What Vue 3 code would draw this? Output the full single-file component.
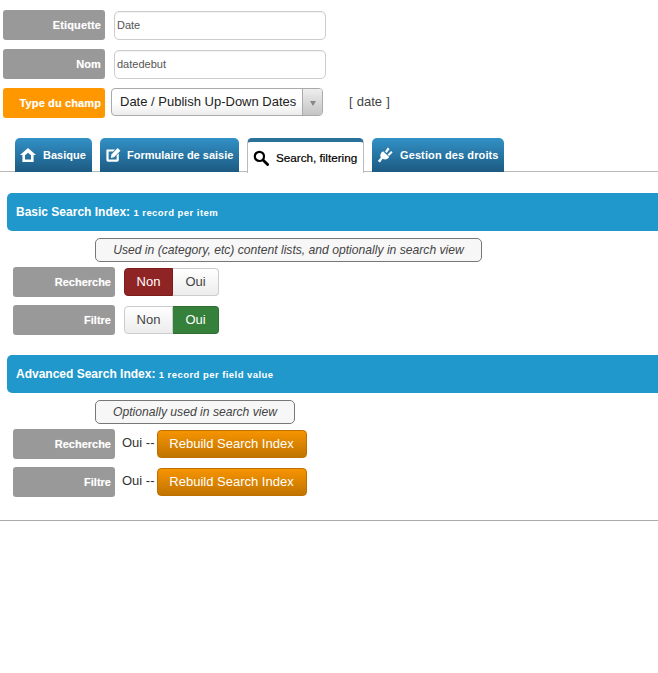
<script setup>
const tabs = [
  { label: 'Basique', icon: 'home' },
  { label: 'Formulaire de saisie', icon: 'edit' },
  { label: 'Search, filtering', icon: 'search', active: true },
  { label: 'Gestion des droits', icon: 'plug' }
]
</script>

<template>
  <div class="page">
    <div class="fields">
      <div class="row">
        <div class="label">Etiquette</div>
        <div class="input">Date</div>
      </div>
      <div class="row">
        <div class="label">Nom</div>
        <div class="input nom">datedebut</div>
      </div>
      <div class="row type">
        <div class="label orange">Type du champ</div>
        <div class="select">
          <span class="select-text">Date / Publish Up-Down Dates</span>
          <span class="select-arrow"><i></i></span>
        </div>
        <span class="code">[ date ]</span>
      </div>
    </div>

    <div class="tabs">
      <div v-for="t in tabs" :key="t.label" class="tab" :class="[t.icon, { active: t.active }]">
        <svg v-if="t.icon === 'home'" class="ic" viewBox="0 0 16 16" width="16" height="16">
          <path d="M8 1 L16 8 L13.6 8 L13.6 15 L2.4 15 L2.4 8 L0 8 Z M5 8.2 L5 12.4 L11 12.4 L11 8.2 L8 5.8 Z" fill="#fff" fill-rule="evenodd"/>
        </svg>
        <svg v-else-if="t.icon === 'edit'" class="ic" viewBox="0 0 16 16" width="16" height="16">
          <path d="M1.6 2.5 H10 L8 4.6 H3.6 V12.6 H11.6 V8.4 L13.8 6.2 V13 A1.8 1.8 0 0 1 12 14.8 H3.2 A1.8 1.8 0 0 1 1.4 13 V4 Z" fill="#fff"/>
          <path d="M12.6 1 L15.4 3.8 L9 10.2 L5.8 11 L6.4 7.4 Z" fill="#fff"/>
        </svg>
        <svg v-else-if="t.icon === 'search'" class="ic" viewBox="0 0 16 16" width="16" height="16">
          <circle cx="6.4" cy="6.4" r="4.6" fill="none" stroke="#000" stroke-width="2.2"/>
          <path d="M10 10 L14.6 14.6" stroke="#000" stroke-width="2.8" stroke-linecap="round"/>
        </svg>
        <svg v-else class="ic" viewBox="0 0 16 16" width="16" height="16">
          <path d="M6 4.2 L12.2 10 C10.8 12.4 8 13.2 5.6 11.8 L3 15.6 L0.8 14 L3.8 10.6 C2.6 8.4 3.6 5.6 6 4.2 Z" fill="#fff"/>
          <path d="M8 4.6 L10.8 0.6 L12.6 1.9 L9.6 6 Z M10.6 7.4 L14.2 4 L15.6 5.6 L12 8.9 Z" fill="#fff"/>
        </svg>
        <span>{{ t.label }}</span>
      </div>
    </div>

    <div class="band">
      <b>Basic Search Index:</b> <small>1 record per item</small>
    </div>
    <div class="note wide">Used in (category, etc) content lists, and optionally in search view</div>
    <div class="opt">
      <div class="label small">Recherche</div>
      <div class="toggle">
        <span class="tbtn red">Non</span><span class="tbtn">Oui</span>
      </div>
    </div>
    <div class="opt second">
      <div class="label small">Filtre</div>
      <div class="toggle">
        <span class="tbtn">Non</span><span class="tbtn green">Oui</span>
      </div>
    </div>

    <div class="band band2">
      <b>Advanced Search Index:</b> <small>1 record per field value</small>
    </div>
    <div class="note narrow">Optionally used in search view</div>
    <div class="opt adv">
      <div class="label small">Recherche</div>
      <span class="oui">Oui --</span>
      <span class="rebuild">Rebuild Search Index</span>
    </div>
    <div class="opt second adv">
      <div class="label small">Filtre</div>
      <span class="oui">Oui --</span>
      <span class="rebuild">Rebuild Search Index</span>
    </div>

    <div class="rule"></div>
  </div>
</template>

<style scoped>
.page {
  width: 658px;
  height: 673px;
  overflow: hidden;
  background: #fff;
  font-family: "Liberation Sans", Arial, sans-serif;
  color: #333;
  box-sizing: border-box;
  padding-top: 10px;
}
.row {
  display: flex;
  align-items: flex-start;
  height: 30px;
  margin-bottom: 9px;
  padding-left: 3px;
}
.label {
  width: 102px;
  height: 30px;
  box-sizing: border-box;
  background: #999;
  color: #fff;
  border-radius: 3px;
  font-size: 11px;
  font-weight: bold;
  letter-spacing: .12px;
  line-height: 30px;
  text-align: right;
  padding-right: 4px;
  text-shadow: 0 0 1px rgba(255,255,255,.4);
  flex: none;
}
.label.orange {
  background: #ff9800;
}
.label.small {
  letter-spacing: 0;
}
.input {
  width: 212px;
  height: 29px;
  box-sizing: border-box;
  margin: 1px 0 0 9px;
  border: 1px solid #ccc;
  border-radius: 5px;
  background: #fff;
  color: #555;
  font-size: 11px;
  line-height: 26px;
  padding-left: 2px;
  box-shadow: inset 0 1px 1px rgba(0,0,0,.05);
}
.row.type { margin-bottom: 0; }
.select {
  display: flex;
  width: 212px;
  height: 28px;
  box-sizing: border-box;
  margin-left: 6px;
  border: 1px solid #aaa;
  border-radius: 4px;
  background: linear-gradient(#fff 50%, #ececec);
  color: #222;
  font-size: 13px;
  line-height: 25px;
  overflow: hidden;
}
.select-text {
  flex: 1;
  padding-left: 8px;
  white-space: nowrap;
}
.select-arrow {
  width: 19px;
  border-left: 1px solid #aaa;
  background: linear-gradient(#eee, #c4c4c4);
  display: flex;
  align-items: center;
  justify-content: center;
}
.select-arrow i {
  width: 0;
  height: 0;
  border-left: 3px solid transparent;
  border-right: 3px solid transparent;
  border-top: 5px solid #888;
  margin-top: 2px;
}
.code {
  margin-left: 26px;
  font-size: 13px;
  word-spacing: .5px;
  line-height: 28px;
  color: #444;
}
.tabs {
  display: flex;
  gap: 8px;
  height: 33px;
  margin-top: 20px;
  padding-left: 15px;
  border-bottom: 1px solid #bbb;
}
.tab {
  height: 34px;
  box-sizing: border-box;
  display: flex;
  align-items: center;
  padding: 0 0 0 5px;
  gap: 7px;
  border-radius: 5px 5px 0 0;
  background: linear-gradient(#3291c6, #1c5a82);
  color: #fff;
  font-size: 11px;
  font-weight: bold;
  white-space: nowrap;
}
.tab .ic { flex: none; }
.tab.home { width: 77px; }
.tab.edit { width: 139px; gap: 6px; }
.tab.search { width: 117px; }
.tab.plug { width: 132px; letter-spacing: .11px; }
.tab.active {
  height: 35px;
  background: #fff;
  color: #000;
  border: 1px solid #bbb;
  border-top: 4px solid #2a7299;
  border-bottom: none;
  font-weight: normal;
  font-size: 11.7px;
  -webkit-text-stroke: .2px #000;
}
.band {
  height: 38px;
  margin: 21px 0 0 7px;
  border-radius: 5px 0 0 5px;
  background: #2098cc;
  color: #fff;
  font-size: 12px;
  line-height: 38px;
  padding-left: 9px;
}
.band small {
  font-size: 9.5px;
  font-weight: bold;
  letter-spacing: .45px;
}
.band2 { margin-top: 20px; }
.note {
  box-sizing: border-box;
  height: 24px;
  margin: 7px 0 0 95px;
  border: 1px solid #777;
  border-radius: 5px;
  background: #f7f7f7;
  color: #444;
  font-size: 12.15px;
  font-style: italic;
  line-height: 22px;
  text-align: center;
}
.note.wide { width: 387px; }
.note.narrow { width: 200px; }
.opt {
  display: flex;
  align-items: flex-start;
  height: 30px;
  margin-top: 5px;
  padding-left: 13px;
}
.opt.second { margin-top: 8px; }
.toggle {
  display: flex;
  margin: 1px 0 0 9px;
  height: 28px;
}
.tbtn {
  box-sizing: border-box;
  height: 28px;
  width: 46px;
  border: 1px solid #ccc;
  background: linear-gradient(#fff, #ececec);
  color: #444;
  font-size: 13px;
  line-height: 26px;
  text-align: center;
}
.tbtn:first-child { width: 49px; border-radius: 4px 0 0 4px; }
.tbtn:last-child { border-radius: 0 4px 4px 0; border-left: none; }
.tbtn.red {
  background: #8f2424;
  border-color: #7b1d1d;
  color: #fff;
}
.tbtn.green {
  background: #35803a;
  border-color: #2d6e31;
  color: #fff;
}
.oui {
  margin-left: 7px;
  font-size: 13px;
  line-height: 28px;
  color: #333;
}
.rebuild {
  box-sizing: border-box;
  width: 150px;
  height: 28px;
  margin: 1px 0 0 2px;
  border: 1px solid #bd7000;
  border-radius: 4px;
  background: linear-gradient(#f79400, #c07400);
  color: #fff;
  font-size: 13px;
  line-height: 26px;
  text-align: center;
}
.rule {
  height: 1px;
  margin-top: 23px;
  background: #aaa;
}
</style>
